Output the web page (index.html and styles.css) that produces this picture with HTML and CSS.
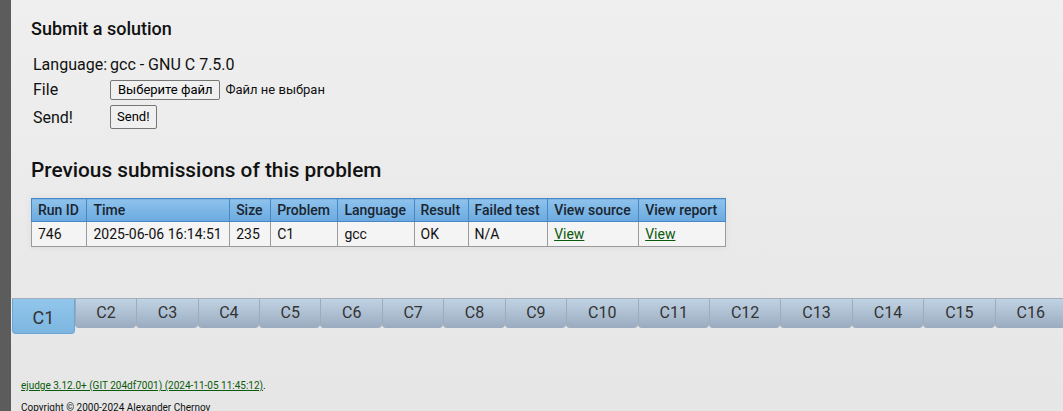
FILE: index.html
```html
<!DOCTYPE html>
<html>
<head>
<meta charset="utf-8">
<link rel="stylesheet" href="styles.css">
</head>
<body>
<div class="page">
  <div class="sidebar"></div>
  <div class="main">
    <div class="content">
      <h2 class="title">Submit a solution</h2>
      <table class="form">
        <tr><td class="lbl">Language:</td><td>gcc - GNU C 7.5.0</td></tr>
        <tr><td class="lbl">File</td><td><span class="btn">Выберите файл</span><span class="nofile">Файл не выбран</span></td></tr>
        <tr class="sendrow"><td class="lbl">Send!</td><td><span class="btn send">Send!</span></td></tr>
      </table>
      <h2 class="title big">Previous submissions of this problem</h2>
      <table class="runs">
        <tr>
          <th>Run ID</th><th>Time</th><th>Size</th><th>Problem</th><th>Language</th><th>Result</th><th>Failed test</th><th>View source</th><th>View report</th>
        </tr>
        <tr>
          <td>746</td><td>2025-06-06 16:14:51</td><td>235</td><td>C1</td><td>gcc</td><td>OK</td><td>N/A</td><td><a href="#">View</a></td><td><a href="#">View</a></td>
        </tr>
      </table>
    </div>
    <div class="tabs">
      <div class="tab active">C1</div>
      <div class="tab">C2</div>
      <div class="tab">C3</div>
      <div class="tab">C4</div>
      <div class="tab">C5</div>
      <div class="tab">C6</div>
      <div class="tab">C7</div>
      <div class="tab">C8</div>
      <div class="tab">C9</div>
      <div class="tab">C10</div>
      <div class="tab">C11</div>
      <div class="tab">C12</div>
      <div class="tab">C13</div>
      <div class="tab">C14</div>
      <div class="tab">C15</div>
      <div class="tab">C16</div>
    </div>
    <div class="footer">
      <p><a href="#">ejudge 3.12.0+ (GIT 204df7001) (2024-11-05 11:45:12)</a>.</p>
      <p>Copyright © 2000-2024 Alexander Chernov</p>
    </div>
  </div>
</div>
</body>
</html>
```

FILE: styles.css
```css
html, body {
  margin: 0;
  padding: 0;
  height: 100%;
  overflow: hidden;
}
body {
  font-family: Roboto, "Liberation Sans", sans-serif;
  color: #111;
  background: linear-gradient(to bottom, #efefef 0%, #e6e6e6 100%);
}
.page {
  display: flex;
  min-height: 411px;
}
.sidebar {
  width: 11px;
  flex: none;
  background: #5c5c5c;
}
.main {
  flex: 1;
  min-width: 0;
  overflow: hidden;
}
.content {
  padding: 19px 0 0 20px;
}
.title {
  margin: 0;
  font-size: 18px;
  font-weight: 500;
  line-height: 20px;
}
.title.big {
  font-size: 20.8px;
  line-height: 24px;
  margin-top: 26px;
}
.form {
  border-collapse: collapse;
  margin-top: 13px;
  font-size: 16px;
}
.form td {
  padding: 0 1px 0 2px;
  height: 25px;
  vertical-align: middle;
}
.form .sendrow td {
  height: 30px;
}
.btn {
  display: inline-block;
  font-size: 13px;
  line-height: 18px;
  padding: 0 7px;
  border: 1px solid #767676;
  border-radius: 2px;
  background: #f0f0f0;
  color: #000;
}
.btn.send {
  line-height: 22px;
  padding: 0 6px;
}
.nofile {
  font-size: 13px;
  margin-left: 5px;
}
.runs {
  border-collapse: collapse;
  margin-top: 16px;
  font-size: 14px;
  box-shadow: 0 0 8px rgba(0,0,0,0.06);
}
.runs th {
  background: linear-gradient(to bottom, #8ec2ec 0%, #6aaae0 100%);
  border: 1px solid #4a86c2;
  font-weight: 500;
  text-align: left;
  padding: 0 7.5px 0 6px;
  height: 22px;
  color: #1b2530;
}
.runs td {
  background: #f4f4f4;
  border: 1px solid #9a9a9a;
  padding: 0 7.5px 0 6px;
  height: 24px;
  color: #111;
}
.runs a {
  color: #0b5a0b;
}
.tabs {
  display: flex;
  margin-top: 51px;
  margin-left: 1px;
  border-top: 1px solid #a4afba;
  height: 29px;
}
.tab {
  flex: none;
  padding: 0 20.5px;
  font-size: 16px;
  line-height: 28px;
  color: #333;
  text-align: center;
  background: linear-gradient(to bottom, #c0d3e4 0%, #9aabbf 100%);
  border-left: 1px solid #9eabb8;
  border-radius: 0 0 4px 4px;
}
.tab:nth-child(n+10) {
  padding: 0 21px;
}
.tab.active {
  background: linear-gradient(to bottom, #92c6ec 0%, #7cb6e0 100%);
  border: 1px solid #6ba6d4;
  border-top: none;
  height: 34px;
  line-height: 38px;
  font-size: 18px;
  padding: 0 19.5px;
}
.footer {
  padding: 52px 0 0 10px;
  font-size: 10px;
}
.footer p {
  margin: 0 0 11px 0;
}
.footer a {
  color: #0b5a0b;
}
```
